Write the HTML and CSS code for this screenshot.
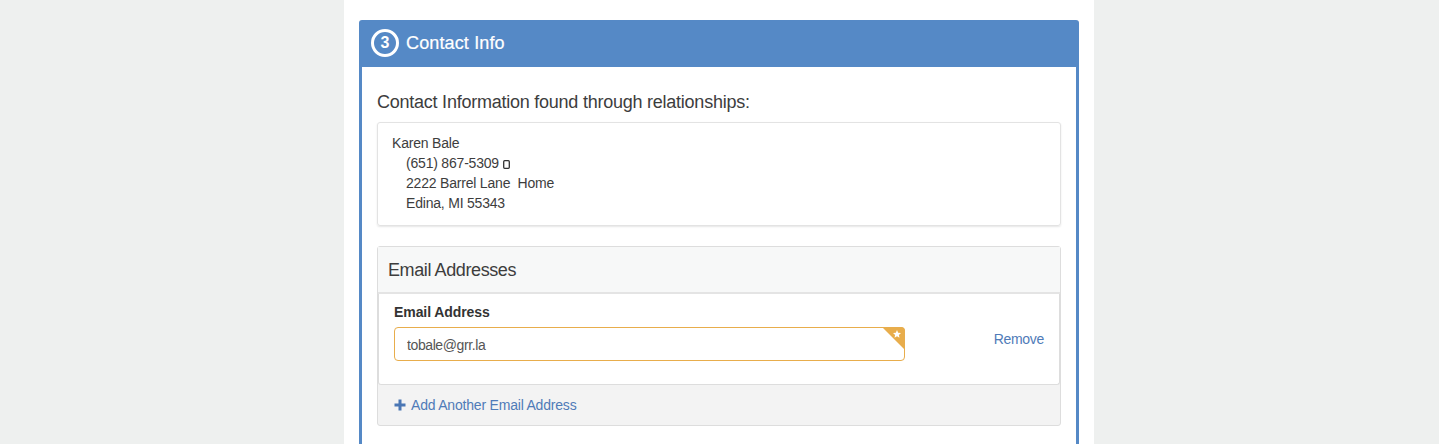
FILE: index.html
```html
<!DOCTYPE html>
<html lang="en">
<head>
  <meta charset="UTF-8">
  <meta name="viewport" content="width=device-width, initial-scale=1.0">
  <title>Contact Info</title>
  <link rel="stylesheet" href="styles.css">
</head>
<body>
  <div class="page">
    <div class="step">
      <div class="step-head">
        <span class="step-num">3</span>
        <h2>Contact Info</h2>
      </div>
      <div class="step-body">
        <h4>Contact Information found through relationships:</h4>
        <div class="well">
          <div>Karen Bale</div>
          <div class="indent">(651) 867-5309
            <svg class="phone" width="7" height="9" viewBox="0 0 7 9"><rect x="0.7" y="0.7" width="5.600" height="7.600" rx="1" fill="none" stroke="#333" stroke-width="1.300"/></svg>
          </div>
          <div class="indent">2222 Barrel Lane &nbsp;Home</div>
          <div class="indent">Edina, MI 55343</div>
        </div>
        <div class="panel">
          <div class="panel-head">Email Addresses</div>
          <div class="panel-body">
            <div class="email-field">
              <label for="email">Email Address</label>
              <div class="input-wrap">
                <input type="text" id="email" value="tobale@grr.la">
                <span class="corner"></span>
                <svg class="star" width="8" height="8" viewBox="0 0 10 10"><path d="M5 0l1.500 3.300 3.500.4-2.600 2.400.7 3.500L5 7.900 1.900 9.600l.7-3.500L0 3.700l3.500-.4z" fill="#fff"/></svg>
              </div>
            </div>
            <a class="remove" href="#">Remove</a>
          </div>
          <div class="panel-foot">
            <a href="#"><svg class="plus" width="12" height="12" viewBox="0 0 12 12"><path d="M4.500 0.500h3v4h4v3h-4v4h-3v-4h-4v-3h4z" fill="#4a76b4"/></svg>Add Another Email Address</a>
          </div>
        </div>
      </div>
    </div>
  </div>
</body>
</html>
```

FILE: styles.css
```css
html, body {
  height: 100%;
}
body {
  margin: 0;
  background-color: #eef0ef;
  font-family: "Liberation Sans", Arial, sans-serif;
  font-size: 14px;
  line-height: 20px;
  letter-spacing: -0.2px;
  color: #3d3d3d;
  overflow: hidden;
}
a {
  color: #4f7bb8;
  text-decoration: none;
}
.page {
  width: 720px;
  margin-left: 344px;
  padding: 20px 15px 0;
  height: 100%;
  background-color: #fff;
}
.step {
  border-radius: 3px 3px 0 0;
  background-color: #5589c6;
  padding: 0 3px 40px;
}
.step-head {
  display: flex;
  align-items: center;
  height: 45px;
  padding: 0 0 2px 9px;
  color: #fff;
}
.step-num {
  width: 22px;
  height: 22px;
  border: 3px solid #fff;
  border-radius: 50%;
  text-align: center;
  line-height: 22px;
  font-size: 16px;
  font-weight: bold;
  letter-spacing: 0;
}
.step-head h2 {
  margin: 0 0 0 7px;
  font-size: 18px;
  font-weight: normal;
  letter-spacing: 0.14px;
  -webkit-text-stroke: 0.2px #fff;
}
.step-body {
  background-color: #fff;
  padding: 25px 15px 20px;
}
h4 {
  margin: 0 0 10px;
  font-size: 18px;
  line-height: 20px;
  font-weight: normal;
  letter-spacing: -0.24px;
}
.well {
  padding: 10px 14px 12px;
  border: 1px solid #e3e3e3;
  border-radius: 3px;
  box-shadow: 0 1px 2px rgba(0, 0, 0, 0.1);
  margin-bottom: 20px;
}
.indent {
  padding-left: 14px;
}
.phone {
  vertical-align: -1px;
}
.panel {
  border: 1px solid #ddd;
  border-radius: 3px;
  background-color: #f3f3f3;
}
.panel-head {
  height: 45px;
  line-height: 47px;
  padding-left: 10px;
  font-size: 18px;
  letter-spacing: -0.4px;
  background-color: #f7f8f8;
  border-bottom: 2px solid #e4e4e4;
}
.panel-body {
  display: flex;
  align-items: flex-start;
  justify-content: space-between;
  height: 82px;
  padding: 8px 15px 0;
  background-color: #fff;
  border: solid #ddd;
  border-width: 0 1px 1px 1px;
  border-radius: 0 0 3px 3px;
}
.email-field {
  width: 511px;
}
label {
  display: block;
  margin-bottom: 5px;
  font-weight: bold;
  letter-spacing: -0.08px;
  color: #333;
}
.input-wrap {
  position: relative;
}
input {
  display: block;
  box-sizing: border-box;
  width: 100%;
  height: 34px;
  padding: 1px 12px 0;
  border: 1px solid #e8ad4c;
  border-radius: 4px;
  font: inherit;
  letter-spacing: -0.4px;
  color: #555;
  outline: none;
}
.corner {
  position: absolute;
  top: 0;
  right: 0;
  width: 0;
  height: 0;
  border-top: 23px solid #e8ad4c;
  border-left: 23px solid transparent;
  border-top-right-radius: 4px;
}
.star {
  position: absolute;
  top: 3px;
  right: 4px;
}
.remove {
  margin-top: 27px;
  letter-spacing: -0.3px;
}
.panel-foot {
  height: 40px;
  line-height: 40px;
  padding-left: 16px;
}
.plus {
  margin-right: 5px;
  vertical-align: -1px;
}
```
